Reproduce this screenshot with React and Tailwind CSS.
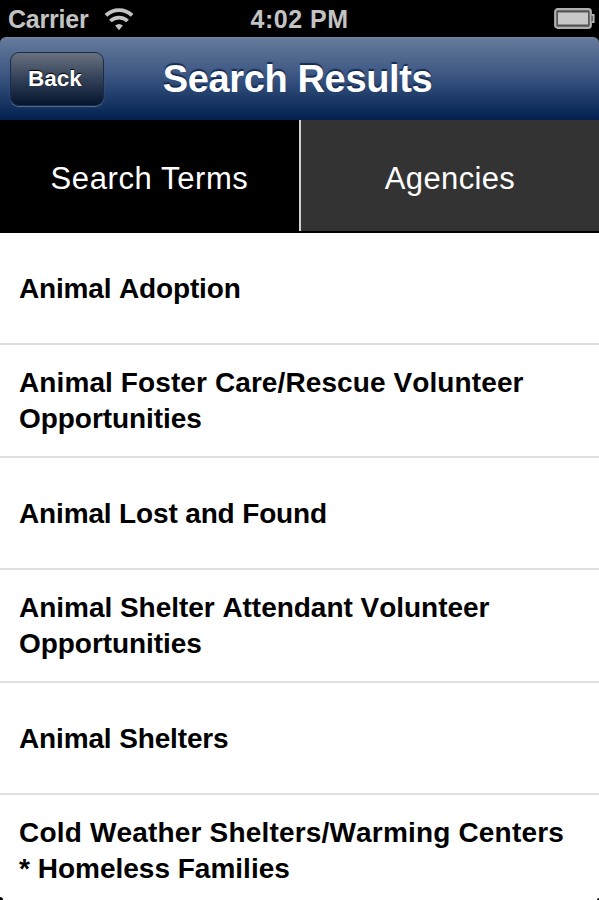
import React, { useState } from 'react';

const results = [
  { id: 1, lines: [{ text: 'Animal Adoption', tracking: 'tracking-[-0.16px]' }] },
  {
    id: 2,
    lines: [
      { text: 'Animal Foster Care/Rescue Volunteer', tracking: 'tracking-[0.1px]' },
      { text: 'Opportunities', tracking: 'tracking-[-0.05px]' },
    ],
  },
  { id: 3, lines: [{ text: 'Animal Lost and Found', tracking: 'tracking-[-0.15px]' }] },
  {
    id: 4,
    lines: [
      { text: 'Animal Shelter Attendant Volunteer', tracking: 'tracking-[-0.03px]' },
      { text: 'Opportunities', tracking: 'tracking-[-0.05px]' },
    ],
  },
  { id: 5, lines: [{ text: 'Animal Shelters', tracking: 'tracking-[-0.14px]' }] },
  {
    id: 6,
    lines: [
      { text: 'Cold Weather Shelters/Warming Centers', tracking: 'tracking-[0.18px]' },
      { text: '* Homeless Families', tracking: 'tracking-normal' },
    ],
  },
];

const WifiIcon = () => (
  <svg width="30" height="24" viewBox="0 0 30 24" fill="none" stroke="#c3c3c3" strokeWidth="3.8">
    <path d="M1.9 8.4a19 19 0 0 1 26.2 0" />
    <path d="M6.4 14a12.4 12.4 0 0 1 17.2 0" />
    <path d="M15 23.2l-3.9-4.6a6 6 0 0 1 7.8 0z" fill="#c3c3c3" stroke="none" />
  </svg>
);

const BatteryIcon = () => (
  <svg width="41" height="21" viewBox="0 0 41 21">
    <rect x="1.2" y="1.2" width="35.6" height="18.6" rx="2.5" fill="#555" stroke="#b0b0b0" strokeWidth="2.2" />
    <rect x="4" y="4.5" width="30" height="12" fill="#c8c8c8" />
    <path d="M37.5 7h2.2v7h-2.2" fill="#555" stroke="#b0b0b0" strokeWidth="1.8" />
  </svg>
);

const StatusBar = () => (
  <div className="grid h-[37px] grid-cols-3 items-center bg-black px-2 text-[25px] font-bold text-[#c3c3c3]">
    <div className="flex items-center gap-[15px]">
      <span className="pt-px leading-[37px] tracking-[-0.2px]">Carrier</span>
      <WifiIcon />
    </div>
    <div className="pt-px text-center leading-[37px] tracking-[0.5px]">4:02 PM</div>
    <div className="-mr-[4px] flex justify-end pb-px">
      <BatteryIcon />
    </div>
  </div>
);

const NavBar = () => (
  <div className="bg-black">
    <div className="grid h-[83px] grid-cols-[1fr_auto_1fr] items-center rounded-t-[6px] border-t border-[#7186a5] bg-linear-to-b from-[#667a9b] via-[#3c5783] via-45% to-[#02204f] px-[10px]">
      <button className="h-[54px] w-[94px] rounded-[9px] border border-[#1b2c4a] bg-linear-to-b from-[#68717f] via-[#334158] via-50% to-[#06152f] pr-1 text-[22.5px] font-bold text-white shadow-[0_1px_1px_#5b7193] [text-shadow:0_-1px_1px_#000]">
        Back
      </button>
      <h1 className="-ml-[4px] text-[38px] leading-[82px] font-bold tracking-[-0.35px] text-white [text-shadow:0_-2px_1px_#142c52]">
        Search Results
      </h1>
      <div />
    </div>
  </div>
);

export default function App() {
  const [tab, setTab] = useState('terms');

  return (
    <div className="relative h-[900px] w-[599px] overflow-hidden bg-white font-['Liberation_Sans',Arial,sans-serif]">
      <StatusBar />
      <NavBar />

      {/* Tabs */}
      <div className="flex h-[112.5px] border-b-2 border-black text-[31px] text-white">
        <button
          onClick={() => setTab('terms')}
          className={`w-[301px] border-r-2 border-[#d0d0d0] pt-[7px] tracking-[0.6px] ${tab === 'terms' ? 'bg-black' : 'bg-[#333333]'}`}
        >
          Search Terms
        </button>
        <button
          onClick={() => setTab('agencies')}
          className={`flex-1 pt-[7px] tracking-[0.35px] ${tab === 'agencies' ? 'bg-black' : 'bg-[#333333]'}`}
        >
          Agencies
        </button>
      </div>

      {/* Results */}
      <ul>
        {results.map((item) => (
          <li
            key={item.id}
            className="flex h-[112.5px] flex-col justify-center border-b-2 border-[#e0e0e0] pt-px pl-[19px] text-[28px] leading-[35.5px] font-bold whitespace-nowrap text-black [font-kerning:none]"
          >
            {item.lines.map((line) => (
              <span key={line.text} className={line.tracking}>{line.text}</span>
            ))}
          </li>
        ))}
      </ul>

      {/* Rounded screen corners */}
      <div className="absolute bottom-0 left-0 h-[3px] w-[3px] rounded-tr-full bg-black" />
      <div className="absolute right-0 bottom-0 h-[2px] w-[2px] rounded-tl-full bg-black" />
    </div>
  );
}
